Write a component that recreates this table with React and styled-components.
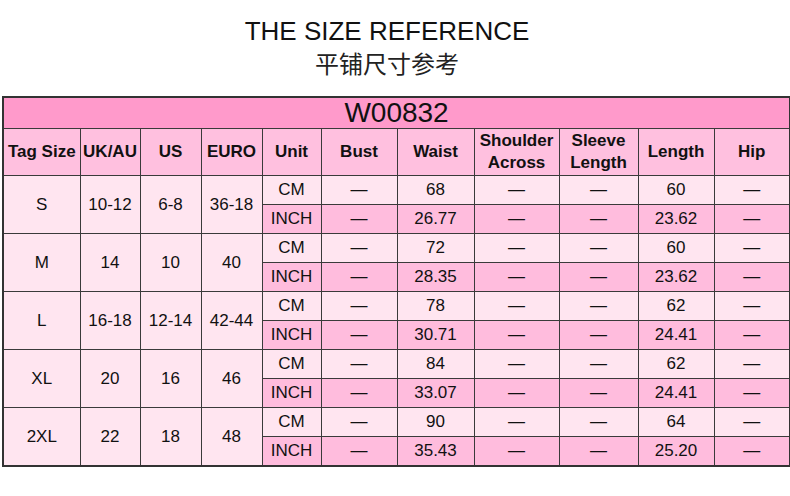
import React from 'react';
import styled, { createGlobalStyle } from 'styled-components';

const GlobalStyle = createGlobalStyle`
  html, body {
    margin: 0;
    padding: 0;
    background: #ffffff;
  }
  body {
    font-family: "Liberation Sans", Arial, "Noto Sans CJK SC", sans-serif;
    color: #111;
  }
`;

const sizes = [
  { tag: 'S', uk: '10-12', us: '6-8', euro: '36-18', cm: ['68', '60'], inch: ['26.77', '23.62'] },
  { tag: 'M', uk: '14', us: '10', euro: '40', cm: ['72', '60'], inch: ['28.35', '23.62'] },
  { tag: 'L', uk: '16-18', us: '12-14', euro: '42-44', cm: ['78', '62'], inch: ['30.71', '24.41'] },
  { tag: 'XL', uk: '20', us: '16', euro: '46', cm: ['84', '62'], inch: ['33.07', '24.41'] },
  { tag: '2XL', uk: '22', us: '18', euro: '48', cm: ['90', '64'], inch: ['35.43', '25.20'] },
];

const columns = [
  { label: 'Tag Size', width: 77 },
  { label: 'UK/AU', width: 60 },
  { label: 'US', width: 61 },
  { label: 'EURO', width: 61 },
  { label: 'Unit', width: 59 },
  { label: 'Bust', width: 76 },
  { label: 'Waist', width: 77 },
  { label: ['Shoulder', 'Across'], width: 85 },
  { label: ['Sleeve', 'Length'], width: 79 },
  { label: 'Length', width: 76 },
  { label: 'Hip', width: 76 },
];

const DASH = '\u2014';

const tones = {
  band: '#ff9acb',
  head: '#ffc0df',
  light: '#ffe5f0',
  pink: '#ffbcdd',
};

const App = () => {
  return (
    <Page>
      <GlobalStyle />
      <Heading>
        <Title>THE SIZE REFERENCE</Title>
        <SubTitle>平铺尺寸参考</SubTitle>
      </Heading>
      <TableWrap>
        <SizeTable>
          <colgroup>
            {columns.map((c, i) => (
              <col key={i} style={{ width: c.width }} />
            ))}
          </colgroup>
          <tbody>
            <tr>
              <BandCell colSpan={columns.length}>W00832</BandCell>
            </tr>
            <tr>
              {columns.map((c, i) => (
                <HeadCell key={i}>
                  {Array.isArray(c.label) ? (
                    <>
                      {c.label[0]}
                      <br />
                      {c.label[1]}
                    </>
                  ) : (
                    c.label
                  )}
                </HeadCell>
              ))}
            </tr>
            {sizes.map((s) => (
              <React.Fragment key={s.tag}>
                <tr>
                  <Cell rowSpan={2} $tone="light">{s.tag}</Cell>
                  <Cell rowSpan={2} $tone="light">{s.uk}</Cell>
                  <Cell rowSpan={2} $tone="light">{s.us}</Cell>
                  <Cell rowSpan={2} $tone="light">{s.euro}</Cell>
                  <Cell $tone="light">CM</Cell>
                  <Cell $tone="light">{DASH}</Cell>
                  <Cell $tone="light">{s.cm[0]}</Cell>
                  <Cell $tone="light">{DASH}</Cell>
                  <Cell $tone="light">{DASH}</Cell>
                  <Cell $tone="light">{s.cm[1]}</Cell>
                  <Cell $tone="light">{DASH}</Cell>
                </tr>
                <tr>
                  <Cell $tone="pink">INCH</Cell>
                  <Cell $tone="pink">{DASH}</Cell>
                  <Cell $tone="pink">{s.inch[0]}</Cell>
                  <Cell $tone="pink">{DASH}</Cell>
                  <Cell $tone="pink">{DASH}</Cell>
                  <Cell $tone="pink">{s.inch[1]}</Cell>
                  <Cell $tone="pink">{DASH}</Cell>
                </tr>
              </React.Fragment>
            ))}
          </tbody>
        </SizeTable>
      </TableWrap>
    </Page>
  );
};

export default App;

const Page = styled.div`
  width: 790px;
  height: 496px;
  overflow: hidden;
`;

const Heading = styled.div`
  display: flex;
  flex-direction: column;
  align-items: center;
  padding-top: 16px;
  height: 80px;
  box-sizing: border-box;
`;

const Title = styled.div`
  font-size: 26px;
  line-height: 30px;
  color: #111;
  transform: translateX(-8px);
`;

const SubTitle = styled.div`
  font-family: "Noto Sans CJK SC", sans-serif;
  font-size: 24px;
  line-height: 34px;
  color: #222;
  transform: translateX(-8px);
`;

const TableWrap = styled.div`
  padding: 16px 1px 0 2px;
`;

const SizeTable = styled.table`
  width: 787px;
  table-layout: fixed;
  border-collapse: collapse;
  border: 2px solid #333;
`;

const Cell = styled.td`
  height: 28px;
  padding: 0;
  border: 1px solid #3a3a3a;
  background: ${(p) => tones[p.$tone]};
  text-align: center;
  vertical-align: middle;
  font-size: 17px;
  line-height: 20px;
  color: #111;
`;

const HeadCell = styled.td`
  height: 46px;
  padding: 0;
  border: 1px solid #3a3a3a;
  background: ${tones.head};
  text-align: center;
  vertical-align: middle;
  font-size: 17px;
  font-weight: bold;
  line-height: 22px;
  color: #111;
  white-space: nowrap;
`;

const BandCell = styled.td`
  height: 30px;
  padding: 0;
  border: 1px solid #3a3a3a;
  background: ${tones.band};
  text-align: center;
  vertical-align: middle;
  font-size: 28px;
  line-height: 30px;
  color: #111;
`;
